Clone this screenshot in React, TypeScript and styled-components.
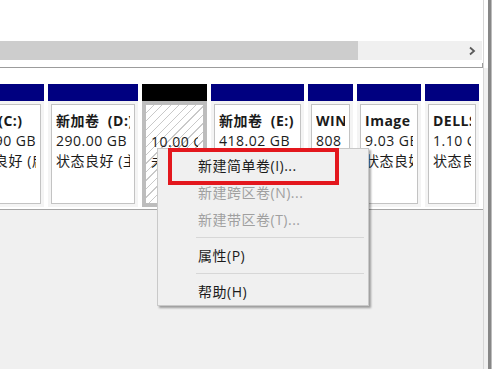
import styled, { createGlobalStyle } from "styled-components";

const GlobalStyle = createGlobalStyle`
  html, body {
    margin: 0;
    padding: 0;
  }
  body {
    width: 500px;
    height: 369px;
    overflow: hidden;
    background: #fff;
    color: #1b1b1b;
    font-family: "Open Sans", "Noto Sans CJK SC", sans-serif;
    font-size: 14px;
    letter-spacing: 0.5px;
  }
`;

type Partition = {
  name: string;
  size: string;
  status: string;
  width: number;
  free?: boolean;
};

const partitions: Partition[] = [
  { name: "系统 (C:)", size: "119.90 GB", status: "状态良好 (启动, 页面文件, 故障转储, 主分区)", width: 87 },
  { name: "新加卷  (D:)", size: "290.00 GB", status: "状态良好 (主分区)", width: 90 },
  { name: "", size: "10.00 GB", status: "未分配", width: 65, free: true },
  { name: "新加卷  (E:)", size: "418.02 GB", status: "状态良好 (主分区)", width: 93 },
  { name: "WINRETOOLS", size: "808 MB", status: "状态良好 (OEM 分区)", width: 45 },
  { name: "Image", size: "9.03 GB", status: "状态良好 (OEM 分区)", width: 64 },
  { name: "DELLSUPPORT", size: "1.10 GB", status: "状态良好 (OEM 分区)", width: 54 },
];

type MenuEntry = { label: string; disabled?: boolean; separator?: boolean };

const menu: MenuEntry[] = [
  { label: "新建简单卷(I)..." },
  { label: "新建跨区卷(N)...", disabled: true },
  { label: "新建带区卷(T)...", disabled: true },
  { label: "", separator: true },
  { label: "属性(P)" },
  { label: "", separator: true },
  { label: "帮助(H)" },
];

const App = () => {
  return (
    <>
      <GlobalStyle />
      <Screen>
        <Main>
          <TopView>
            <Blank />
            <HScroll>
              <Thumb />
              <Track>
                <svg width="8" height="10" viewBox="0 0 8 10">
                  <polyline points="2,1.5 6,5 2,8.5" fill="none" stroke="#5a5a5a" strokeWidth="1.8" />
                </svg>
              </Track>
            </HScroll>
          </TopView>
          <DiskArea>
            <Row>
              {partitions.map((p) => (
                <Cell key={p.size} $width={p.width}>
                  <Header $free={p.free} />
                  <Body $free={p.free}>
                    <Inner $free={p.free}>
                      <Line $bold>{p.name || "\u00a0"}</Line>
                      <Line>{p.size}</Line>
                      <Line>{p.status}</Line>
                    </Inner>
                  </Body>
                </Cell>
              ))}
            </Row>
          </DiskArea>
          <Lower />
        </Main>
        <Gutter />
        <EdgeLine />
        <Outside />
        <Menu>
          {menu.map((m, i) =>
            m.separator ? (
              <Separator key={i} />
            ) : (
              <MenuItem key={i} $disabled={m.disabled}>
                {m.label}
              </MenuItem>
            )
          )}
          <RedMark />
        </Menu>
      </Screen>
    </>
  );
};

export default App;

const Screen = styled.div`
  position: relative;
  display: flex;
  width: 500px;
  height: 369px;
  overflow: hidden;
`;

const Main = styled.div`
  display: flex;
  flex-direction: column;
  width: 483px;
  border-right: 1px solid #d6d6d6;
`;

const TopView = styled.div`
  position: relative;
  height: 67px;
  background: #fff;
  border-bottom: 1px solid #9c9c9c;
  &::after {
    content: "";
    position: absolute;
    right: 0;
    bottom: 0;
    width: 1px;
    height: 4px;
    background: #9c9c9c;
  }
`;

const Blank = styled.div`
  height: 41px;
`;

const HScroll = styled.div`
  display: flex;
  height: 19px;
  margin-right: 1px;
`;

const Thumb = styled.div`
  width: 358px;
  background: #cdcdcd;
`;

const Track = styled.div`
  flex: 1;
  display: flex;
  align-items: center;
  justify-content: flex-end;
  padding-right: 6px;
  background: #f0f0f0;
`;

const DiskArea = styled.div`
  background: #fff;
  padding: 16px 0 2px;
  border-bottom: 1px solid #a5a5a5;
  overflow: hidden;
`;

const Row = styled.div`
  display: flex;
  gap: 4px;
  margin-left: -43px;
`;

const Cell = styled.div<{ $width: number }>`
  flex: none;
  display: flex;
  flex-direction: column;
  width: ${(p) => p.$width}px;
`;

const Header = styled.div<{ $free?: boolean }>`
  height: 17px;
  background: ${(p) => (p.$free ? "#000" : "#000080")};
`;

const Body = styled.div<{ $free?: boolean }>`
  height: 106px;
  box-sizing: border-box;
  padding: ${(p) => (p.$free ? "0" : "3px")};
  background: #f4f4f4;
  border: ${(p) => (p.$free ? "4px solid #bdbdbd" : "none")};
`;

const Inner = styled.div<{ $free?: boolean }>`
  height: 100%;
  box-sizing: border-box;
  padding: ${(p) => (p.$free ? "7px 5px 0 5px" : "6px 4px 0 4px")};
  border: ${(p) => (p.$free ? "none" : "1px solid #c3c3c3")};
  background: ${(p) =>
    p.$free
      ? "repeating-linear-gradient(135deg, #fff 0 5px, #c9c9c9 5px 6px)"
      : "#fff"};
  overflow: hidden;
`;

const Line = styled.div<{ $bold?: boolean }>`
  height: 20px;
  line-height: 20px;
  white-space: pre;
  overflow: hidden;
  font-weight: ${(p) => (p.$bold ? 700 : 400)};
  color: #1b1b1b;
`;

const Lower = styled.div`
  flex: 1;
  background: #f0f0f0;
`;

const Gutter = styled.div`
  width: 4px;
  background: linear-gradient(#fff 0 68px, #f0f0f0 68px);
`;

const EdgeLine = styled.div`
  width: 3px;
  background: #878787;
  border-right: 1px solid #bdbdbd;
`;

const Outside = styled.div`
  flex: 1;
  background: #fff;
`;

const Menu = styled.div`
  position: absolute;
  left: 157px;
  top: 148px;
  width: 212px;
  box-sizing: border-box;
  padding: 3px 0 0;
  background: #f0f0f0;
  border: 1px solid #c9c9c9;
  box-shadow: 2px 2px 2px rgba(0, 0, 0, 0.35);
`;

const MenuItem = styled.div<{ $disabled?: boolean }>`
  height: 27px;
  line-height: 27px;
  padding-left: 40px;
  white-space: nowrap;
  color: ${(p) => (p.$disabled ? "#a0a0a0" : "#1b1b1b")};
`;

const Separator = styled.div`
  height: 9px;
  margin: 0 4px 0 38px;
  background: linear-gradient(transparent 0 4px, #d7d7d7 4px 5px, transparent 5px);
`;

const RedMark = styled.div`
  position: absolute;
  left: 10px;
  top: -1px;
  width: 171px;
  height: 37px;
  box-sizing: border-box;
  border: 4px solid #e3171d;
`;
